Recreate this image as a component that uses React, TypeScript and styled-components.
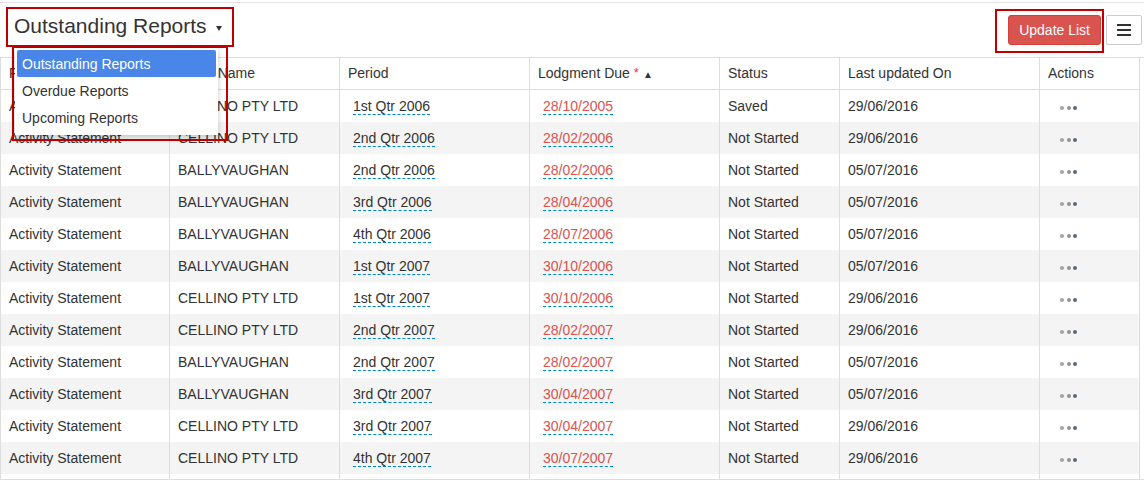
import React from "react";
import styled, { createGlobalStyle } from "styled-components";

const GlobalStyle = createGlobalStyle`
  html, body { margin: 0; padding: 0; background: #fff; }
  body {
    font-family: "Liberation Sans", Arial, Helvetica, sans-serif;
    font-size: 14px;
    color: #333;
  }
  * { box-sizing: border-box; }
`;

const ANNOT = "#c00000";

const Page = styled.div`
  padding-top: 2px;
  width: 1144px;
`;

const Toolbar = styled.div`
  display: flex;
  justify-content: space-between;
  align-items: flex-start;
  height: 55px;
  border-top: 1px solid #e3e3e3;
`;

const TitleWrap = styled.div`
  position: relative;
  margin-left: 6px;
  margin-top: 4px;
`;

const TitleBox = styled.div`
  display: flex;
  align-items: center;
  width: 228px;
  height: 40px;
  padding: 0 0 3px 6px;
  border: 2px solid ${ANNOT};
  font-size: 21px;
  color: #333;
`;

const Caret = styled.span`
  display: inline-block;
  width: 0;
  height: 0;
  margin-left: 9px;
  margin-top: 5px;
  border-top: 5px solid #333;
  border-left: 3px solid transparent;
  border-right: 3px solid transparent;
`;

const MenuHighlight = styled.div`
  position: absolute;
  top: 39px;
  left: 6px;
  width: 216px;
  height: 95px;
  border: 2px solid ${ANNOT};
  padding-left: 1px;
  z-index: 10;
`;

const Menu = styled.ul`
  list-style: none;
  margin: 0;
  width: 203px;
  padding: 2px 2px 4px;
  background: #fff;
  box-shadow: 0 2px 6px rgba(0, 0, 0, 0.22);
`;

const MenuItem = styled.li<{ $active?: boolean }>`
  display: flex;
  align-items: center;
  height: 27px;
  padding-left: 5px;
  border-radius: 2px;
  font-size: 14px;
  background: ${(p) => (p.$active ? "#4a86e8" : "transparent")};
  color: ${(p) => (p.$active ? "#fff" : "#333")};
`;

const RightGroup = styled.div`
  display: flex;
  align-items: flex-start;
`;

const ButtonHighlight = styled.div`
  margin-top: 6px;
  height: 44px;
  padding: 4px 1px 6px 11px;
  border: 2px solid ${ANNOT};
`;

const UpdateButton = styled.button`
  height: 30px;
  padding: 0 10px;
  border: 1px solid #d43f3a;
  border-radius: 3px;
  background: #d9534f;
  color: #fff;
  font-family: inherit;
  font-size: 14px;
  cursor: pointer;
`;

const MenuButton = styled.button`
  display: flex;
  align-items: center;
  justify-content: center;
  margin: 12px 2px 0 2px;
  width: 36px;
  height: 30px;
  padding: 0;
  border: 1px solid #ccc;
  border-radius: 2px;
  background: #fff;
`;

const ScrollArea = styled.div`
  height: 423px;
  overflow-y: scroll;
  border-top: 1px solid #ddd;
  border-bottom: 1px solid #ddd;
  &::-webkit-scrollbar { width: 4px; }
  &::-webkit-scrollbar-track { background: #f1f1f1; margin-top: 40px; }
  &::-webkit-scrollbar-thumb {
    background: #c1c1c1;
    border: 1px solid transparent;
    background-clip: padding-box;
  }
`;

const Grid = styled.div`
  width: 1140px;
  border-left: 1px solid #ddd;
`;

const COLS = "169px 170px 190px 190px 120px 200px 100px";

const HeaderRow = styled.div`
  display: grid;
  grid-template-columns: ${COLS};
  height: 32px;
  border-bottom: 1px solid #ddd;
`;

const Row = styled.div<{ $striped: boolean }>`
  display: grid;
  grid-template-columns: ${COLS};
  height: 32px;
  background: ${(p) => (p.$striped ? "#f4f4f4" : "#fff")};
`;

const Cell = styled.div`
  display: flex;
  align-items: center;
  padding-left: 8px;
  border-right: 1px solid #ddd;
  white-space: nowrap;
  overflow: hidden;
  color: #333;
`;

const HeadCell = styled(Cell)`
  color: #333;
  padding-bottom: 1px;
`;

const Required = styled.sup`
  color: #e8322d;
  font-size: 13px;
  margin-left: 4px;
  position: relative;
  top: -1px;
`;

const SortArrow = styled.span`
  font-size: 10px;
  margin-left: 4px;
  margin-top: 3px;
  color: #333;
`;

const Editable = styled.a<{ $due?: boolean }>`
  margin-left: 5px;
  color: ${(p) => (p.$due ? "#d9534f" : "#333")};
  text-decoration: none;
  border-bottom: 1px dashed #0088cc;
  cursor: pointer;
`;

const Dots = styled.span`
  display: flex;
  gap: 2.5px;
  margin-left: 12px;
  margin-top: 4px;
`;

const Dot = styled.span<{ $c: string }>`
  width: 4px;
  height: 4px;
  border-radius: 50%;
  background: ${(p) => p.$c};
`;

type R = [string, string, string, string, string, string];

const rows: R[] = [
  ["Activity Statement", "CELLINO PTY LTD", "1st Qtr 2006", "28/10/2005", "Saved", "29/06/2016"],
  ["Activity Statement", "CELLINO PTY LTD", "2nd Qtr 2006", "28/02/2006", "Not Started", "29/06/2016"],
  ["Activity Statement", "BALLYVAUGHAN", "2nd Qtr 2006", "28/02/2006", "Not Started", "05/07/2016"],
  ["Activity Statement", "BALLYVAUGHAN", "3rd Qtr 2006", "28/04/2006", "Not Started", "05/07/2016"],
  ["Activity Statement", "BALLYVAUGHAN", "4th Qtr 2006", "28/07/2006", "Not Started", "05/07/2016"],
  ["Activity Statement", "BALLYVAUGHAN", "1st Qtr 2007", "30/10/2006", "Not Started", "05/07/2016"],
  ["Activity Statement", "CELLINO PTY LTD", "1st Qtr 2007", "30/10/2006", "Not Started", "29/06/2016"],
  ["Activity Statement", "CELLINO PTY LTD", "2nd Qtr 2007", "28/02/2007", "Not Started", "29/06/2016"],
  ["Activity Statement", "BALLYVAUGHAN", "2nd Qtr 2007", "28/02/2007", "Not Started", "05/07/2016"],
  ["Activity Statement", "BALLYVAUGHAN", "3rd Qtr 2007", "30/04/2007", "Not Started", "05/07/2016"],
  ["Activity Statement", "CELLINO PTY LTD", "3rd Qtr 2007", "30/04/2007", "Not Started", "29/06/2016"],
  ["Activity Statement", "CELLINO PTY LTD", "4th Qtr 2007", "30/07/2007", "Not Started", "29/06/2016"],
  ["Activity Statement", "BALLYVAUGHAN", "4th Qtr 2007", "30/07/2007", "Not Started", "05/07/2016"],
  ["Activity Statement", "CELLINO PTY LTD", "1st Qtr 2008", "28/10/2007", "Not Started", "29/06/2016"],
  ["Activity Statement", "BALLYVAUGHAN", "1st Qtr 2008", "28/10/2007", "Not Started", "05/07/2016"],
  ["Activity Statement", "CELLINO PTY LTD", "2nd Qtr 2008", "28/02/2008", "Not Started", "29/06/2016"],
];

const HamburgerIcon = () => (
  <svg width="14" height="12" viewBox="0 0 14 12" aria-hidden="true">
    <rect x="0" y="0" width="14" height="2" fill="#333" />
    <rect x="0" y="5" width="14" height="2" fill="#333" />
    <rect x="0" y="10" width="14" height="2" fill="#333" />
  </svg>
);

export default function App() {
  return (
    <>
      <GlobalStyle />
      <Page>
        <Toolbar>
          <TitleWrap>
            <TitleBox>
              Outstanding Reports
              <Caret />
            </TitleBox>
            <MenuHighlight>
              <Menu>
                <MenuItem $active>Outstanding Reports</MenuItem>
                <MenuItem>Overdue Reports</MenuItem>
                <MenuItem>Upcoming Reports</MenuItem>
              </Menu>
            </MenuHighlight>
          </TitleWrap>
          <RightGroup>
            <ButtonHighlight>
              <UpdateButton>Update List</UpdateButton>
            </ButtonHighlight>
            <MenuButton aria-label="Menu">
              <HamburgerIcon />
            </MenuButton>
          </RightGroup>
        </Toolbar>
        <ScrollArea>
          <Grid>
            <HeaderRow>
              <HeadCell>Form Type</HeadCell>
              <HeadCell>Client Name</HeadCell>
              <HeadCell>Period</HeadCell>
              <HeadCell>
                Lodgment Due<Required>*</Required>
                <SortArrow>▲</SortArrow>
              </HeadCell>
              <HeadCell>Status</HeadCell>
              <HeadCell>Last updated On</HeadCell>
              <HeadCell>Actions</HeadCell>
            </HeaderRow>
            {rows.map((r, i) => (
              <Row key={i} $striped={i % 2 === 1}>
                <Cell>{r[0]}</Cell>
                <Cell>{r[1]}</Cell>
                <Cell>
                  <Editable>{r[2]}</Editable>
                </Cell>
                <Cell>
                  <Editable $due>{r[3]}</Editable>
                </Cell>
                <Cell>{r[4]}</Cell>
                <Cell>{r[5]}</Cell>
                <Cell>
                  <Dots>
                    <Dot $c="#a3a3a3" />
                    <Dot $c="#8f939a" />
                    <Dot $c="#5c6878" />
                  </Dots>
                </Cell>
              </Row>
            ))}
          </Grid>
        </ScrollArea>
      </Page>
    </>
  );
}
